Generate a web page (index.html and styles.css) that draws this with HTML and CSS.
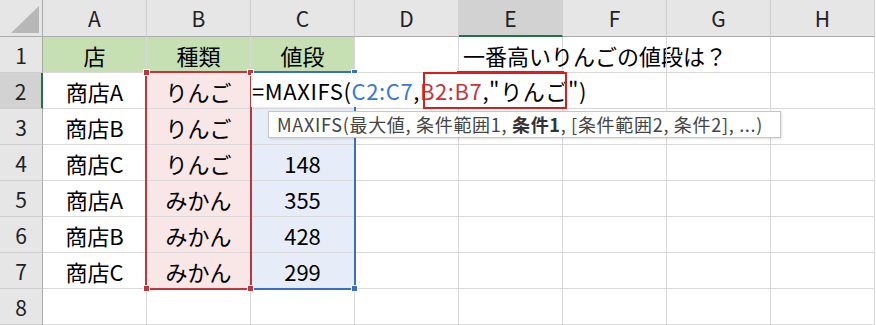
FILE: index.html
```html
<!DOCTYPE html>
<html lang="ja">
<head>
    <meta charset="UTF-8">
    <title>MAXIFS</title>
    <link rel="stylesheet" href="styles.css">
</head>
<body>
    <div class="sheet">
        <div class="grid">
            <div class="corner">
                <svg width="43" height="37" viewBox="0 0 43 37"><polygon points="11,33 39,33 39,6" fill="#b7b7b7"/></svg>
            </div>
            <div class="col-head">A</div>
            <div class="col-head">B</div>
            <div class="col-head">C</div>
            <div class="col-head">D</div>
            <div class="col-head selected">E</div>
            <div class="col-head">F</div>
            <div class="col-head">G</div>
            <div class="col-head">H</div>

            <div class="row-head">1</div>
            <div class="cell title">店</div>
            <div class="cell title">種類</div>
            <div class="cell title">値段</div>
            <div class="cell"></div>
            <div class="cell text-left">一番高いりんごの値段は？</div>
            <div class="cell"></div>
            <div class="cell"></div>
            <div class="cell"></div>

            <div class="row-head selected">2</div>
            <div class="cell">商店A</div>
            <div class="cell pink">りんご</div>
            <div class="cell blue"></div>
            <div class="cell"></div>
            <div class="cell"></div>
            <div class="cell"></div>
            <div class="cell"></div>
            <div class="cell"></div>

            <div class="row-head">3</div>
            <div class="cell">商店B</div>
            <div class="cell pink">りんご</div>
            <div class="cell blue"></div>
            <div class="cell"></div>
            <div class="cell"></div>
            <div class="cell"></div>
            <div class="cell"></div>
            <div class="cell"></div>

            <div class="row-head">4</div>
            <div class="cell">商店C</div>
            <div class="cell pink">りんご</div>
            <div class="cell blue">148</div>
            <div class="cell"></div>
            <div class="cell"></div>
            <div class="cell"></div>
            <div class="cell"></div>
            <div class="cell"></div>

            <div class="row-head">5</div>
            <div class="cell">商店A</div>
            <div class="cell pink">みかん</div>
            <div class="cell blue">355</div>
            <div class="cell"></div>
            <div class="cell"></div>
            <div class="cell"></div>
            <div class="cell"></div>
            <div class="cell"></div>

            <div class="row-head">6</div>
            <div class="cell">商店B</div>
            <div class="cell pink">みかん</div>
            <div class="cell blue">428</div>
            <div class="cell"></div>
            <div class="cell"></div>
            <div class="cell"></div>
            <div class="cell"></div>
            <div class="cell"></div>

            <div class="row-head">7</div>
            <div class="cell">商店C</div>
            <div class="cell pink">みかん</div>
            <div class="cell blue">299</div>
            <div class="cell"></div>
            <div class="cell"></div>
            <div class="cell"></div>
            <div class="cell"></div>
            <div class="cell"></div>

            <div class="row-head">8</div>
            <div class="cell"></div>
            <div class="cell"></div>
            <div class="cell"></div>
            <div class="cell"></div>
            <div class="cell"></div>
            <div class="cell"></div>
            <div class="cell"></div>
            <div class="cell"></div>
        </div>

        <!-- 参照範囲の枠 -->
        <div class="range range-b"></div>
        <div class="range range-c"></div>
        <span class="handle red" style="left:143px;top:69px"></span>
        <span class="handle red" style="left:247px;top:69px"></span>
        <span class="handle red" style="left:143px;top:285px"></span>
        <span class="handle red" style="left:247px;top:285px"></span>
        <span class="handle blue-h" style="left:351px;top:69px"></span>
        <span class="handle blue-h" style="left:351px;top:285px"></span>

        <!-- 編集中の数式 -->
        <div class="edit-box">=MAXIFS(<span class="ref-c">C2:C7</span>,<span class="ref-b">B2:B7</span>,"りんご")</div>
        <div class="active-cell"></div>
        <div class="note-box"></div>

        <div class="tooltip">MAXIFS(最大値, 条件範囲1, <b>条件1</b>, [条件範囲2, 条件2], ...)</div>
    </div>
</body>
</html>
```

FILE: styles.css
```css
body {
    margin: 0;
    background: #fff;
    font-family: "Noto Sans CJK JP", "Noto Sans", sans-serif;
}
.sheet {
    position: relative;
    width: 876px;
    height: 325px;
    overflow: hidden;
}
.grid {
    display: grid;
    grid-template-columns: 43px repeat(8, 104px);
    grid-template-rows: 37px repeat(8, 36px);
}
.corner {
    background: #e6e6e6;
    border-right: 1px solid #ababab;
    border-bottom: 1px solid #ababab;
    box-sizing: border-box;
}
.corner svg {
    display: block;
}
.col-head,
.row-head {
    background: #e6e6e6;
    color: #222;
    font-size: 21px;
    display: flex;
    align-items: center;
    justify-content: center;
    box-sizing: border-box;
}
.col-head {
    border-right: 1px solid #cfcfcf;
    border-bottom: 1px solid #ababab;
}
.col-head.selected {
    background: #d2d2d2;
    border-bottom: 2px solid #217346;
}
.row-head {
    border-right: 1px solid #ababab;
    border-bottom: 1px solid #cfcfcf;
}
.row-head.selected {
    background: #d2d2d2;
    border-right: 2px solid #217346;
}
.cell {
    border-right: 1px solid #d9d9d9;
    border-bottom: 1px solid #d9d9d9;
    box-sizing: border-box;
    font-size: 22px;
    color: #000;
    display: flex;
    align-items: center;
    justify-content: center;
    white-space: nowrap;
}
.cell.title {
    background: #c6e0b4;
}
.cell.pink {
    background: #f9e6e6;
}
.cell.blue {
    background: #e6edf8;
}
.cell.text-left {
    justify-content: flex-start;
    padding-left: 4px;
    overflow: visible;
}
.range {
    position: absolute;
    box-sizing: border-box;
    border: 2px solid;
}
.range-b {
    left: 145px;
    top: 71px;
    width: 107px;
    height: 219px;
    border-color: #c4343c;
}
.range-c {
    left: 251px;
    top: 71px;
    width: 105px;
    height: 219px;
    border-color: #3a6ec8;
    border-left: none;
}
.handle {
    position: absolute;
    width: 7px;
    height: 7px;
    border: 1px solid #fff;
    box-sizing: border-box;
}
.handle.red {
    background: #c4343c;
}
.handle.blue-h {
    background: #3a6ec8;
}
.edit-box {
    position: absolute;
    left: 251px;
    top: 73px;
    width: 344px;
    height: 34px;
    background: #fff;
    font-size: 22px;
    letter-spacing: 0.6px;
    line-height: 34px;
    padding-left: 1px;
    color: #000;
    white-space: nowrap;
}
.ref-c {
    color: #3a78d6;
}
.ref-b {
    color: #c8343c;
}
.active-cell {
    position: absolute;
    left: 457px;
    top: 71px;
    width: 107px;
    height: 38px;
    box-sizing: border-box;
    border-top: 2px solid #217346;
    border-bottom: 2px solid #217346;
}
.note-box {
    position: absolute;
    left: 423px;
    top: 72px;
    width: 144px;
    height: 37px;
    box-sizing: border-box;
    border: 2px solid #e3191c;
}
.tooltip {
    position: absolute;
    left: 268px;
    top: 111px;
    width: 513px;
    height: 27px;
    box-sizing: border-box;
    background: #fff;
    border: 1px solid #c6c6c6;
    box-shadow: 1px 1px 2px rgba(0, 0, 0, 0.12);
    color: #444;
    font-size: 18px;
    letter-spacing: 0.7px;
    line-height: 25px;
    padding-left: 8px;
    white-space: nowrap;
}
.tooltip b {
    color: #333;
}
```
